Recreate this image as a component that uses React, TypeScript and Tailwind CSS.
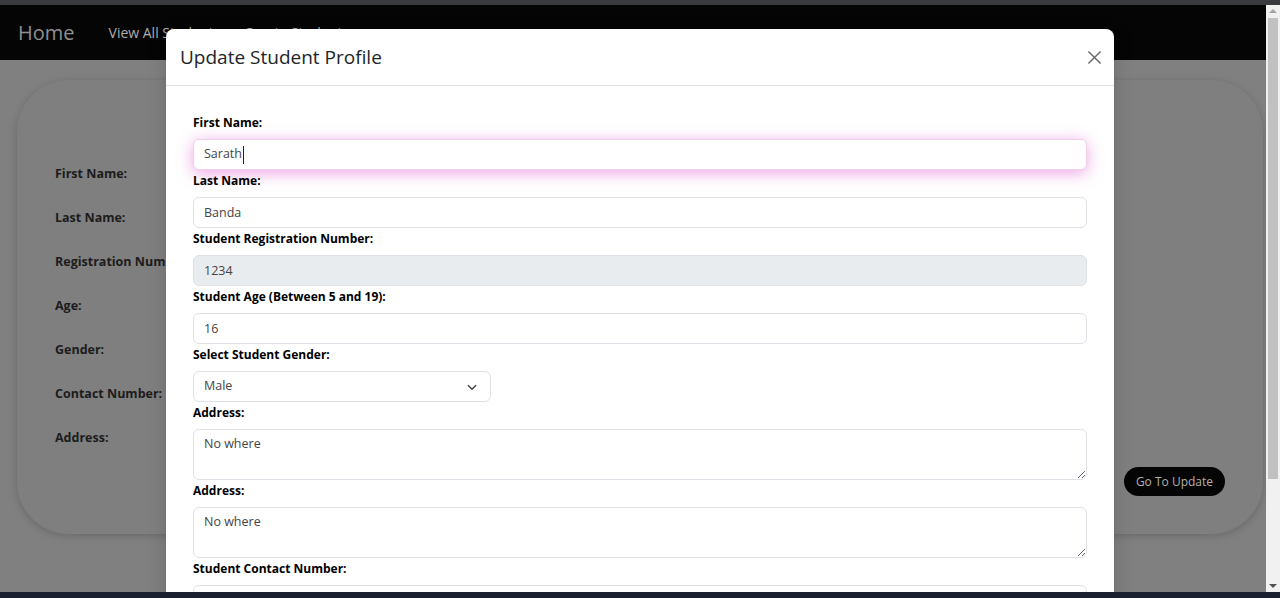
import React from 'react'

const labelCls = 'block text-[12px] leading-[20px] font-bold text-black mb-[6px]'
const inputCls =
  'block w-full h-[31px] rounded-[6px] border border-[#dee2e6] bg-white px-[10px] text-[12.5px] text-[#444] outline-none'
const areaCls =
  'block w-full h-[51px] rounded-[6px] border border-[#dee2e6] px-[10px] py-[5px] text-[12.5px] text-[#444] outline-none'

const cardRows = [
  'First Name:',
  'Last Name:',
  'Registration Number:',
  'Age:',
  'Gender:',
  'Contact Number:',
  'Address:',
]

function Field({ label, children }: { label: string; children: React.ReactNode }) {
  return (
    <div className="mb-[1px]">
      <label className={labelCls}>{label}</label>
      {children}
    </div>
  )
}

export default function App() {
  return (
    <div
      className="w-[1280px] h-[598px] overflow-hidden flex flex-col bg-[#808080]"
      style={{ fontFamily: '"Open Sans", "Noto Sans", sans-serif' }}
    >
      <div className="h-[5px] bg-[#3a3b3f]" />
      <div className="flex flex-1 min-h-0">
        {/* Page (dimmed under the modal backdrop) */}
        <div className="relative flex-1 min-w-0 overflow-hidden">
          <nav className="h-[55px] bg-[#050505] flex items-center pl-[18px]">
            <span className="text-[20px] text-[#8f8f8f] mr-[34px]">Home</span>
            <span className="text-[14px] text-[#aeaeae] mr-[24px]">View All Students</span>
            <span className="text-[14px] text-[#aeaeae]">Create Student</span>
          </nav>

          <div className="pl-[17px] pr-[3px] pt-[20px]">
            <div className="rounded-[52px] bg-[#7f7f7f] shadow-[0_2px_8px_rgba(0,0,0,0.18)] pt-[72px] pb-[38px]">
              <div className="pl-[38px]">
                {cardRows.map((r) => (
                  <div key={r} className="h-[44px] flex items-center">
                    <span className="text-[12.5px] font-bold text-[#1c1c1c]">{r}</span>
                  </div>
                ))}
              </div>
              <div className="flex justify-end pr-[38px] mt-[7px]">
                <button className="h-[29px] px-[12px] rounded-full bg-[#050505] text-[12px] text-[#b4afab]">
                  Go To Update
                </button>
              </div>
            </div>
          </div>

          {/* Modal */}
          <div className="absolute left-[166px] top-[24px] w-[948px] bg-white rounded-t-[8px] shadow-[0_4px_20px_rgba(0,0,0,0.15)]">
            <div className="h-[57px] flex items-center justify-between pl-[14px] pr-[12px] border-b border-[#dee2e6]">
              <h5 className="text-[19px] font-medium text-[#212529]">Update Student Profile</h5>
              <svg width="15" height="15" viewBox="0 0 16 16" fill="none" stroke="#6b6b6b" strokeWidth="1.6">
                <path d="M1.5 1.5 L14.5 14.5 M14.5 1.5 L1.5 14.5" />
              </svg>
            </div>
            <div className="px-[27px] pt-[27px] pb-[20px]">
              <Field label="First Name:">
                <div className="flex items-center w-full h-[31px] rounded-[6px] border border-[#f0d0ea] bg-white px-[10px] text-[12.5px] text-[#444] shadow-[0_3px_16px_rgba(225,100,210,0.6)]">
                  Sarath
                  <span className="inline-block w-px h-[18px] bg-[#222] ml-px" />
                </div>
              </Field>
              <Field label="Last Name:">
                <input className={inputCls} defaultValue="Banda" readOnly />
              </Field>
              <Field label="Student Registration Number:">
                <input className={inputCls + ' !bg-[#e9ecef]'} defaultValue="1234" readOnly />
              </Field>
              <Field label="Student Age (Between 5 and 19):">
                <input className={inputCls} defaultValue="16" readOnly />
              </Field>
              <Field label="Select Student Gender:">
                <div className="w-[298px] h-[31px] rounded-[6px] border border-[#dee2e6] flex items-center justify-between pl-[10px] pr-[12px] text-[12.5px] text-[#444]">
                  <span>Male</span>
                  <svg width="12" height="12" viewBox="0 0 16 16" fill="none" stroke="#444" strokeWidth="1.8" strokeLinecap="round" strokeLinejoin="round">
                    <path d="M3 6 L8 11 L13 6" />
                  </svg>
                </div>
              </Field>
              <Field label="Address:">
                <textarea className={areaCls} defaultValue="No where" readOnly />
              </Field>
              <Field label="Address:">
                <textarea className={areaCls} defaultValue="No where" readOnly />
              </Field>
              <Field label="Student Contact Number:">
                <input className={inputCls} defaultValue="" readOnly />
              </Field>
            </div>
          </div>
        </div>

        {/* Scrollbar */}
        <div className="w-[14px] bg-[#f1f1f1] flex flex-col items-center">
          <div className="h-[12px] flex items-center justify-center">
            <div className="w-0 h-0 border-l-[4px] border-r-[4px] border-b-[4px] border-l-transparent border-r-transparent border-b-[#a3a3a3]" />
          </div>
          <div className="w-[10px] h-[461px] bg-[#c1c1c1] mt-px" />
          <div className="flex-1" />
          <div className="h-[12px] flex items-center justify-center">
            <div className="w-0 h-0 border-l-[4px] border-r-[4px] border-t-[4px] border-l-transparent border-r-transparent border-t-[#505050]" />
          </div>
        </div>
      </div>
      <div className="h-[6px] bg-[#1b2030]" />
    </div>
  )
}
